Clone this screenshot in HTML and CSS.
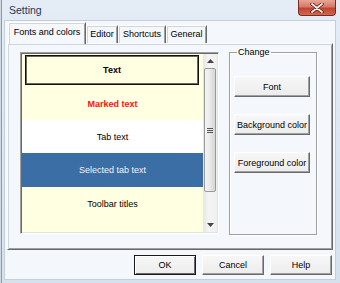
FILE: index.html
```html
<!DOCTYPE html>
<html>
<head>
<meta charset="utf-8">
<link rel="stylesheet" href="styles.css">
</head>
<body>
<div class="window">
  <div class="titlebar">
    <span class="title">Setting</span>
    <div class="close">
      <svg width="14" height="10" viewBox="0 0 14 10">
        <path d="M2 1 L12 9 M12 1 L2 9" stroke="#5a1a14" stroke-width="3.4" stroke-linecap="round"/>
        <path d="M2 1 L12 9 M12 1 L2 9" stroke="#f2f2f2" stroke-width="1.8" stroke-linecap="round"/>
      </svg>
    </div>
  </div>
  <div class="client">
    <div class="tabs">
      <div class="tab active w1">Fonts and colors</div>
      <div class="tab w2">Editor</div>
      <div class="tab w3">Shortcuts</div>
      <div class="tab w4">General</div>
    </div>
    <div class="panel">
      <div class="listbox">
        <div class="items">
          <div class="item yellow bold focus"><div class="frame">Text</div></div>
          <div class="item yellow bold red">Marked text</div>
          <div class="item white">Tab text</div>
          <div class="item selected">Selected tab text</div>
          <div class="item yellow">Toolbar titles</div>
          <div class="item yellow rest"></div>
        </div>
        <div class="scrollbar">
          <div class="arrow">
            <svg width="7" height="4" viewBox="0 0 7 4"><path d="M0 4 L3.5 0 L7 4 Z" fill="#444"/></svg>
          </div>
          <div class="track">
            <div class="thumb">
              <div class="grip"></div>
            </div>
          </div>
          <div class="arrow">
            <svg width="7" height="4" viewBox="0 0 7 4"><path d="M0 0 L3.5 4 L7 0 Z" fill="#444"/></svg>
          </div>
        </div>
      </div>
      <fieldset class="group">
        <legend>Change</legend>
        <button class="btn wide">Font</button>
        <button class="btn wide">Background color</button>
        <button class="btn wide">Foreground color</button>
      </fieldset>
    </div>
    <div class="footer">
      <button class="btn dlg default">OK</button>
      <button class="btn dlg">Cancel</button>
      <button class="btn dlg">Help</button>
    </div>
  </div>
</div>
</body>
</html>
```

FILE: styles.css
```css
html, body {
  margin: 0;
  padding: 0;
  width: 340px;
  height: 283px;
  overflow: hidden;
  background: #dce5f0;
}

.window {
  width: 340px;
  height: 283px;
  box-sizing: border-box;
  padding: 0 4px 3px 4px;
  background: linear-gradient(#e4ecf6, #d6e1ee);
  box-shadow: inset 1px 0 0 #d0d8e2, inset 2px 0 0 #8e9aa8;
  display: flex;
  flex-direction: column;
  font-family: "Liberation Sans", Arial, sans-serif;
  font-size: 9px;
  color: #000;
}

.titlebar {
  height: 20px;
  display: flex;
  justify-content: space-between;
  align-items: flex-start;
}

.title {
  font-size: 10.5px;
  color: #1e395b;
  padding: 4px 0 0 5px;
}

.close {
  width: 38px;
  height: 16px;
  box-sizing: border-box;
  border: 1px solid #7c2a20;
  border-top: none;
  border-radius: 0 0 4px 4px;
  background: linear-gradient(#e8a595 0%, #d77a68 45%, #c2432f 55%, #cf6a50 100%);
  display: flex;
  align-items: center;
  justify-content: center;
}

.client {
  flex: 1;
  box-sizing: border-box;
  border: 1px solid #c4cfdc;
  background: #f4f7fb;
  padding: 1px 2px 0 2px;
  display: flex;
  flex-direction: column;
}

.tabs {
  height: 21px;
  display: flex;
  align-items: flex-end;
  padding-left: 1px;
}

.tab {
  box-sizing: border-box;
  height: 18px;
  border: 1px solid #fff;
  border-bottom: none;
  border-right-color: #696969;
  box-shadow: inset 1px 1px 0 #d4d4d4, inset -1px 0 0 #a0a0a0;
  display: flex;
  align-items: center;
  justify-content: center;
  padding-bottom: 1px;
  background: #f4f7fb;
}

.tab.active {
  height: 22px;
  margin-bottom: -1px;
  position: relative;
  z-index: 1;
  padding-bottom: 3px;
}

.w1 { width: 78px; }
.w2 { width: 32px; }
.w3 { width: 48px; }
.w4 { width: 41px; }

.panel {
  height: 207px;
  box-sizing: border-box;
  border: 1px solid #fff;
  border-right-color: #696969;
  border-bottom-color: #696969;
  box-shadow: inset 1px 1px 0 #cfd5dc, inset -1px -1px 0 #a0a0a0;
  padding: 8px 0 0 12px;
  display: flex;
  align-items: flex-start;
}

.listbox {
  width: 199px;
  height: 182px;
  box-sizing: border-box;
  border: 1px solid #a0a0a0;
  border-right-color: #fff;
  border-bottom-color: #fff;
  box-shadow: inset 1px 1px 0 #696969, inset -1px -1px 0 #e3e3e3;
  padding: 1px;
  display: flex;
}

.items {
  width: 181px;
  display: flex;
  flex-direction: column;
  overflow: hidden;
}

.item {
  height: 33px;
  flex: none;
  display: flex;
  align-items: center;
  justify-content: center;
}

.item.selected {
  height: 34px;
  background: #3a6ea5;
  color: #f4f4f4;
}

.item.rest {
  flex: 1;
}

.yellow { background: #ffffe1; }
.white { background: #ffffff; }
.bold { font-weight: bold; }
.red { color: #ff1010; }

.item.focus {
  padding: 1px 4px 2px 3px;
  align-items: stretch;
  justify-content: stretch;
  box-sizing: border-box;
}

.frame {
  flex: 1;
  border: 1px solid #111;
  box-shadow: inset 0 0 0 1px #6a6a60;
  display: flex;
  align-items: center;
  justify-content: center;
}

.scrollbar {
  width: 14px;
  display: flex;
  flex-direction: column;
  background: linear-gradient(90deg, #e6e6e6, #f4f4f4 40%, #f0f0f0);
}

.arrow {
  height: 14px;
  display: flex;
  align-items: center;
  justify-content: center;
}

.track {
  flex: 1;
  padding: 0 1px;
  display: flex;
  flex-direction: column;
}

.thumb {
  height: 124px;
  box-sizing: border-box;
  border: 1px solid #9a9a9a;
  border-radius: 2px;
  background: linear-gradient(90deg, #f5f5f5, #e9e9e9 50%, #d5d5d5);
  display: flex;
  align-items: center;
  justify-content: center;
}

.grip {
  width: 6px;
  height: 5px;
  background: repeating-linear-gradient(#555 0 1px, transparent 1px 2px);
}

.group {
  margin: -5px 0 0 10px;
  width: 88px;
  height: 188px;
  box-sizing: border-box;
  border: 1px solid #a0a0a0;
  box-shadow: 1px 1px 0 #fff, inset 1px 1px 0 #fff;
  padding: 18px 4px 0 4px;
  display: flex;
  flex-direction: column;
  gap: 17px;
}

.group legend {
  padding: 0 1px;
  margin-left: 3px;
  font-size: 9px;
  line-height: 11px;
}

.btn {
  font-family: "Liberation Sans", Arial, sans-serif;
  font-size: 9px;
  color: #000;
  margin: 0;
  padding: 0;
  box-sizing: border-box;
  border: 1px solid #fff;
  border-right-color: #696969;
  border-bottom-color: #696969;
  box-shadow: inset -1px -1px 0 #a0a0a0;
  background: linear-gradient(#f7f7f7, #ececec);
  border-radius: 0;
}

.btn.wide {
  width: 76px;
  height: 21px;
  flex: none;
}

.footer {
  display: flex;
  justify-content: flex-end;
  gap: 6px;
  padding: 5px 1px 0 0;
}

.btn.dlg {
  width: 62px;
  height: 20px;
}

.btn.default {
  border: 1px solid #1a1a1a;
  box-shadow: inset 1px 1px 0 #fff, inset -1px -1px 0 #696969;
}
```
